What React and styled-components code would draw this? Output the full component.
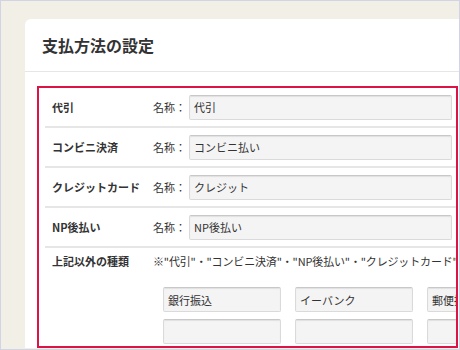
import React from "react";
import styled, { createGlobalStyle } from "styled-components";

const GlobalStyle = createGlobalStyle`
  html, body {
    margin: 0;
    padding: 0;
    background: #f2efe7;
  }
  * {
    box-sizing: border-box;
  }
`;

const Frame = styled.div`
  width: 460px;
  height: 350px;
  border: 1px solid #d3d3e6;
  background: #f2efe7;
  overflow: hidden;
  padding: 18px 0 0 24px;
  font-family: "Noto Sans CJK JP", "Noto Sans", sans-serif;
  color: #333;
`;

const Card = styled.div`
  width: 520px;
  background: #fff;
  border-radius: 6px 0 0 0;
`;

const CardHeader = styled.div`
  height: 53px;
  padding: 0 17px;
  display: flex;
  align-items: center;
  border-bottom: 1px solid #e6e6e6;
`;

const Title = styled.h1`
  margin: 0;
  font-size: 16px;
  font-weight: 700;
  color: #333;
`;

const CardBody = styled.div`
  padding: 14px 12px 0;
`;

const Highlight = styled.div`
  width: 421px;
  height: 262px;
  border: 2px solid #dc1446;
  overflow: hidden;
  padding-left: 6px;
`;

const Row = styled.div`
  display: flex;
  align-items: ${(p) => (p.top ? "flex-start" : "center")};
  height: ${(p) => (p.top ? "auto" : "40px")};
  padding-top: ${(p) => (p.top ? "5px" : "0")};
  border-bottom: ${(p) => (p.last ? "none" : "2px solid #e6e6e6")};
`;

const Label = styled.div`
  width: 108px;
  flex-shrink: 0;
  padding-left: 7px;
  font-size: 11px;
  font-weight: 700;
  line-height: 16px;
`;

const Caption = styled.span`
  width: 36px;
  flex-shrink: 0;
  font-size: 11px;
  line-height: 16px;
`;

const Field = styled.div`
  width: ${(p) => p.width || "263px"};
  height: 25px;
  flex-shrink: 0;
  display: flex;
  align-items: center;
  padding: 0 4px;
  background: #f4f4f4;
  border: 1px solid #dadada;
  border-top-color: #c8c8c8;
  box-shadow: inset 0 1px 1px rgba(0, 0, 0, 0.08);
  border-radius: 2px;
  font-size: 11px;
  color: #333;
  white-space: nowrap;
  overflow: hidden;
`;

const Other = styled.div`
  display: flex;
  flex-direction: column;
`;

const Note = styled.div`
  font-size: 11px;
  line-height: 16px;
  letter-spacing: -0.15px;
  white-space: nowrap;
`;

const FieldGrid = styled.div`
  display: grid;
  grid-template-columns: repeat(3, 118px);
  column-gap: 14px;
  row-gap: 7px;
  margin: 18px 0 0 10px;
`;

const methods = [
  { label: "代引", value: "代引" },
  { label: "コンビニ決済", value: "コンビニ払い" },
  { label: "クレジットカード", value: "クレジット" },
  { label: "NP後払い", value: "NP後払い" },
];

const extras = ["銀行振込", "イーバンク", "郵便振替", "", "", ""];

export default function App() {
  return (
    <>
      <GlobalStyle />
      <Frame>
        <Card>
          <CardHeader>
            <Title>支払方法の設定</Title>
          </CardHeader>
          <CardBody>
            <Highlight>
              {methods.map((m) => (
                <Row key={m.label}>
                  <Label>{m.label}</Label>
                  <Caption>名称：</Caption>
                  <Field>{m.value}</Field>
                </Row>
              ))}
              <Row top last>
                <Label>上記以外の種類</Label>
                <Other>
                  <Note>
                    ※"代引"・"コンビニ決済"・"NP後払い"・"クレジットカード"以外の支払方法
                  </Note>
                  <FieldGrid>
                    {extras.map((e, i) => (
                      <Field key={i} width="118px">
                        {e}
                      </Field>
                    ))}
                  </FieldGrid>
                </Other>
              </Row>
            </Highlight>
          </CardBody>
        </Card>
      </Frame>
    </>
  );
}
